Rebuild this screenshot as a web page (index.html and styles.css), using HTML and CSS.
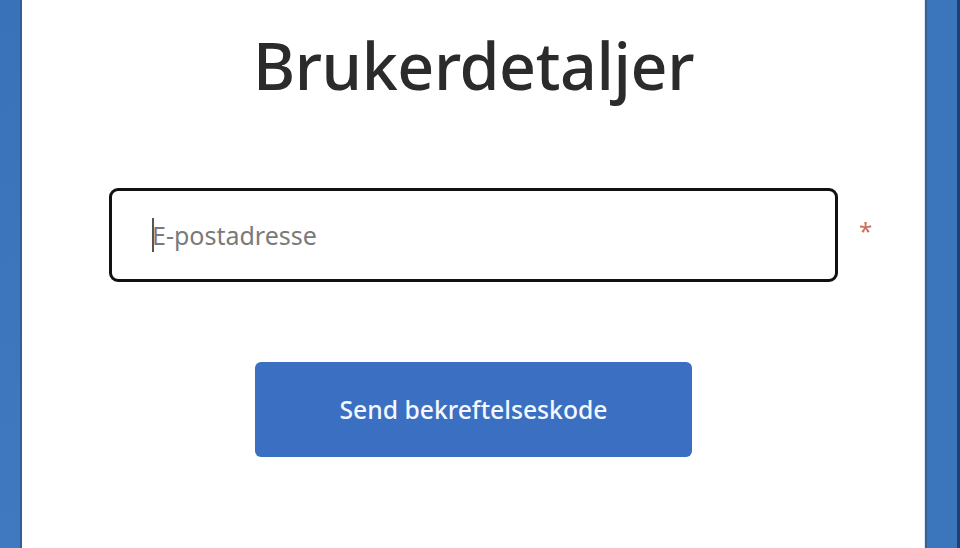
FILE: index.html
```html
<!DOCTYPE html>
<html lang="no">
<head>
<meta charset="utf-8">
<link rel="stylesheet" href="styles.css">
</head>
<body>
<div class="page">
  <div class="side side-left"></div>
  <main class="panel">
    <h1 class="title">Brukerdetaljer</h1>
    <div class="field-row">
      <div class="input"><span class="caret"></span><span class="placeholder">E-postadresse</span></div>
      <span class="req">*</span>
    </div>
    <button class="btn">Send bekreftelseskode</button>
  </main>
  <div class="side side-right"></div>
</div>
</body>
</html>
```
FILE: styles.css
```css
html, body { margin: 0; padding: 0; }
body { width: 960px; height: 548px; overflow: hidden; font-family: "Noto Sans", "Open Sans", sans-serif; }
.page { display: flex; height: 548px; }
.side { background: #3b74bb; }
.side-left { width: 20px; border-right: 2px solid #2d5f9e; background: linear-gradient(160deg, #3a72b9 0%, #3c75bc 40%, #4079bf 100%); }
.side-right { width: 30px; border-left: 2px solid #3c5f8e; border-right: 3px solid #1f3f74; box-shadow: -1px 0 0 #d8ecf8; background: #3b76bd; }
.panel { flex: 1; background: #fff; display: flex; flex-direction: column; align-items: center; }
.title { margin: 20px 0 0; font-size: 64.5px; font-weight: 500; color: #2b2b2b; line-height: 90px; letter-spacing: -0.4px; }
.field-row { margin-top: 78px; position: relative; }
.input { box-sizing: border-box; width: 729px; height: 94px; border: 3px solid #111; border-radius: 9px; display: flex; align-items: center; padding-left: 40px; }
.caret { width: 2px; height: 34px; background: #555; margin-right: -2px; }
.placeholder { font-size: 25px; color: #7a7a7a; }
.req { position: absolute; left: 750px; top: 26px; color: #c9705c; font-size: 24px; }
.btn { margin-top: 80px; width: 437px; height: 95px; border: none; border-radius: 6px; background: #3a6fc2; color: #f4f8ff; font-family: "Noto Sans", "Open Sans", sans-serif; font-size: 24.7px; font-weight: 500; padding: 0; }
```
